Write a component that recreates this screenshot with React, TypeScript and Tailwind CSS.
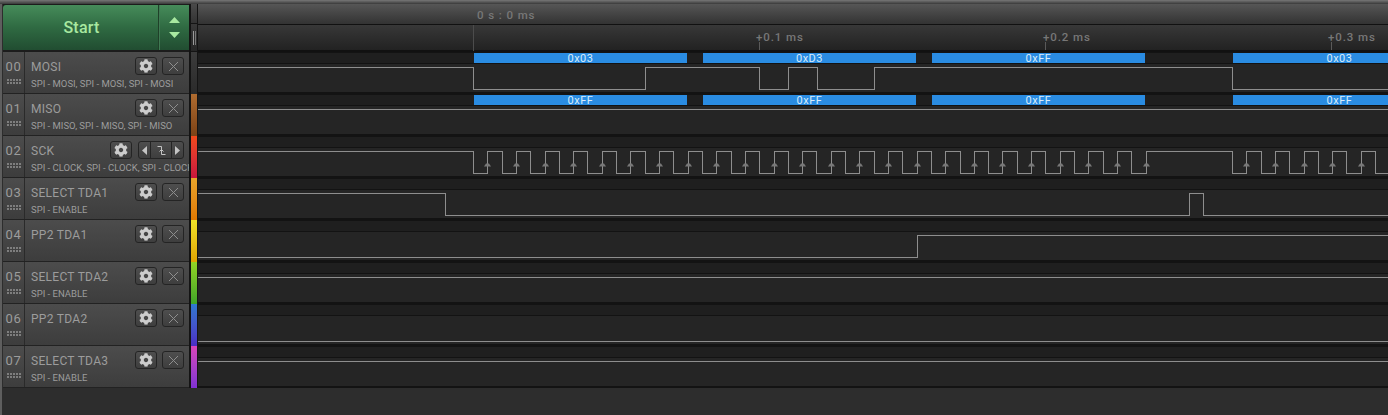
import React from "react";
import { FaCog } from "react-icons/fa";

const font = { fontFamily: "Roboto, sans-serif" };

function step(start: boolean, edges: number[], hi: number, lo: number) {
  let level = start;
  let d = `M198 ${(level ? hi : lo) + 0.5}`;
  for (const e of edges) {
    const x = e + 0.5;
    d += ` L${x} ${(level ? hi : lo) + 0.5}`;
    level = !level;
    d += ` L${x} ${(level ? hi : lo) + 0.5}`;
  }
  d += ` L1388 ${(level ? hi : lo) + 0.5}`;
  return d;
}

const sckEdges: number[] = [];
const sckRises: number[] = [];
for (let k = 0; k < 48; k++) {
  const x = Math.round(473 + 14.31 * k);
  sckEdges.push(x);
  if (k % 2 === 1) sckRises.push(x);
}
for (let k = 0; k < 12; k++) {
  const x = Math.round(1232 + 14.31 * k);
  if (x > 1388) break;
  sckEdges.push(x);
  if (k % 2 === 1) sckRises.push(x);
}

type Ch = {
  no: string;
  name: string;
  sub: string;
  strip: string;
  start: boolean;
  edges: number[];
  bars?: string;
  clock?: boolean;
};

const channels: Ch[] = [
  { no: "00", name: "MOSI", sub: "SPI - MOSI, SPI - MOSI, SPI - MOSI", strip: "bg-gradient-to-b from-[#3c3c3c] to-[#2a2a2a]", start: true, edges: [473, 645, 759, 788, 817, 874, 1232], bars: "mosi" },
  { no: "01", name: "MISO", sub: "SPI - MISO, SPI - MISO, SPI - MISO", strip: "bg-gradient-to-b from-[#b06c30] to-[#7c4216]", start: true, edges: [], bars: "miso" },
  { no: "02", name: "SCK", sub: "SPI - CLOCK, SPI - CLOCK, SPI - CLOCK", strip: "bg-gradient-to-b from-[#f2491a] to-[#c8143c]", start: true, edges: sckEdges, clock: true },
  { no: "03", name: "SELECT TDA1", sub: "SPI - ENABLE", strip: "bg-gradient-to-b from-[#e8a52a] to-[#e07800]", start: true, edges: [445, 1189, 1203] },
  { no: "04", name: "PP2 TDA1", sub: "", strip: "bg-gradient-to-b from-[#f0e428] to-[#e0a400]", start: false, edges: [917] },
  { no: "05", name: "SELECT TDA2", sub: "SPI - ENABLE", strip: "bg-gradient-to-b from-[#92d424] to-[#3ea428]", start: true, edges: [] },
  { no: "06", name: "PP2 TDA2", sub: "", strip: "bg-gradient-to-b from-[#2f78d0] to-[#4a2cc4]", start: false, edges: [] },
  { no: "07", name: "SELECT TDA3", sub: "SPI - ENABLE", strip: "bg-gradient-to-b from-[#d844b8] to-[#8030d4]", start: true, edges: [] },
];

function Grip() {
  const dots: React.ReactNode[] = [];
  for (let r = 0; r < 2; r++)
    for (let c = 0; c < 5; c++)
      dots.push(<rect key={`${r}-${c}`} x={c * 3} y={r * 3} width={2} height={2} fill="#7e7e7e" />);
  return (
    <svg width="14" height="5" viewBox="0 0 14 5" className="block">
      {dots}
    </svg>
  );
}

function IconButton({ children, w = "w-[22px]" }: { children: React.ReactNode; w?: string }) {
  return (
    <div className={`${w} h-[18px] flex items-center justify-center rounded-[3px] border border-[#242424] bg-gradient-to-b from-[#4e4e4e] to-[#3e3e3e]`}>
      {children}
    </div>
  );
}

function Controls({ clock }: { clock?: boolean }) {
  return (
    <div className="flex items-center gap-[5px] pr-[5px]">
      <div className={clock ? "mr-[1px]" : ""}>
        <IconButton>
          <FaCog size={14} color="#cccccc" />
        </IconButton>
      </div>
      {clock ? (
        <div className="w-[46px] h-[18px] flex items-stretch rounded-[3px] border border-[#242424] bg-gradient-to-b from-[#4e4e4e] to-[#3e3e3e]">
          <div className="w-[12px] flex items-center justify-center border-r border-[#242424]">
            <svg width="5" height="9" viewBox="0 0 5 9"><path d="M5 0V9L0 4.5Z" fill="#c4c4c4" /></svg>
          </div>
          <div className="flex-1 flex items-center justify-center">
            <svg width="9" height="11" viewBox="0 0 9 11" fill="none" stroke="#c4c4c4" strokeWidth="1">
              <path d="M0.5 1.5H4.5V9.5H8.5" />
              <path d="M2.5 6.5L4.5 4.5L6.5 6.5" />
            </svg>
          </div>
          <div className="w-[12px] flex items-center justify-center border-l border-[#242424]">
            <svg width="5" height="9" viewBox="0 0 5 9"><path d="M0 0V9L5 4.5Z" fill="#c4c4c4" /></svg>
          </div>
        </div>
      ) : (
        <IconButton>
          <svg width="11" height="11" viewBox="0 0 11 11" stroke="#8e8e8e" strokeWidth="1">
            <path d="M1 1L10 10M10 1L1 10" />
          </svg>
        </IconButton>
      )}
    </div>
  );
}

function Bar({ label, w, ml }: { label: string; w: string; ml: string }) {
  return (
    <div className={`${w} ${ml} shrink-0 h-[10px] bg-[#2a8ce2] flex items-center justify-center text-[11px] leading-none tracking-[0.5px] text-[#d8ecfb]`}>
      {label}
    </div>
  );
}

function Bars({ labels }: { labels: string[] }) {
  return (
    <div className="h-[10px] bg-[#1f1f1f] flex overflow-hidden">
      <Bar label={labels[0]} w="w-[213px]" ml="ml-[276px]" />
      <Bar label={labels[1]} w="w-[213px]" ml="ml-[16px]" />
      <Bar label={labels[2]} w="w-[213px]" ml="ml-[16px]" />
      <Bar label={labels[3]} w="w-[213px]" ml="ml-[88px]" />
    </div>
  );
}

function Row({ ch }: { ch: Ch }) {
  return (
    <div className="flex h-[42px]">
      <div className="w-[186px] shrink-0 flex border-b border-[#222222] bg-gradient-to-b from-[#4c4c4c] to-[#3d3d3d]">
        <div className="w-[22px] shrink-0 border-r border-[#2a2a2a] flex flex-col items-center pt-[7px]">
          <div className="text-[13px] leading-[16px] text-[#9c9c9c] tracking-[0.6px]">{ch.no}</div>
          <div className="mt-[4px]"><Grip /></div>
        </div>
        <div className="flex-1 min-w-0 pl-[6px] pt-[5px] flex flex-col overflow-hidden">
          <div className="flex items-start justify-between">
            <div className="text-[12px] leading-[16px] tracking-[0.3px] text-[#9c9c9c] whitespace-nowrap mt-[2px]">{ch.name}</div>
            <Controls clock={ch.clock} />
          </div>
          <div className="text-[9.5px] leading-[12px] text-[#9c9c9c] whitespace-nowrap mt-[3px]">{ch.sub}</div>
        </div>
      </div>
      <div className="w-[2px] shrink-0 bg-[#141414]" />
      <div className={`w-[6px] shrink-0 ${ch.strip}`} />
      <div className="w-[1px] shrink-0 bg-[#141414]" />
      <div className="flex-1 bg-[#131313] pt-[1px] min-w-0">
        {ch.bars === "mosi" ? (
          <Bars labels={["0x03", "0xD3", "0xFF", "0x03"]} />
        ) : ch.bars === "miso" ? (
          <Bars labels={["0xFF", "0xFF", "0xFF", "0xFF"]} />
        ) : (
          <div className="h-[10px] bg-[#1f1f1f]" />
        )}
        <div className="h-[1px]" />
        <svg width="1190" height="28" viewBox="198 12 1190 28" className="block bg-[#252525]">
          <path d={step(ch.start, ch.edges, 15, 37)} fill="none" stroke="#8e8e8e" strokeWidth="1" shapeRendering="crispEdges" />
          {ch.clock &&
            sckRises.map((x) => (
              <polygon key={x} points={`${x - 3},30.5 ${x - 1},27.5 ${x + 2},27.5 ${x + 4},30.5`} fill="#787878" />
            ))}
        </svg>
      </div>
    </div>
  );
}

function Tick({ label, x, tx }: { label: string; x: string; tx: string }) {
  return (
    <>
      <div className={`absolute top-[6px] ${tx} text-[11.5px] font-medium leading-[14px] tracking-[0.9px] text-[#777777] whitespace-nowrap`}>{label}</div>
      <div className={`absolute top-[18px] h-[8px] w-[1px] bg-[#5a5a5a] ${x}`} />
    </>
  );
}

export default function App() {
  return (
    <div className="w-[1388px] h-[415px] overflow-hidden bg-[#2d2d2d] flex flex-col" style={font}>
      <div className="h-[4px] shrink-0 bg-gradient-to-b from-[#777777] to-[#3a3a3a]" />
      <div className="flex-1 flex border-l-2 border-[#5e5e5e] min-h-0">
        <div className="flex-1 min-w-0 flex flex-col pl-[1px]">
          <div className="flex h-[48px] shrink-0">
            <div className="w-[186px] shrink-0 flex bg-[#1c1c1c] pt-[1px] pb-[2px] items-stretch">
              <div className="flex-1 flex items-center justify-center pl-[2px] rounded-tl-[3px] bg-gradient-to-b from-[#468c5a] via-[#2f6a42] to-[#214d31] text-[16px] font-medium text-[#a8e8a0] tracking-[0.2px]">
                Start
              </div>
              <div className="w-[1px] bg-[#1f4029]" />
              <div className="w-[30px] flex flex-col items-center justify-center gap-[9px] border-l border-[#3f7a52] bg-gradient-to-b from-[#468c5a] via-[#2f6a42] to-[#214d31]">
                <svg width="11" height="6" viewBox="0 0 11 6"><path d="M5.5 0L11 6H0Z" fill="#a8e8a0" /></svg>
                <svg width="11" height="6" viewBox="0 0 11 6"><path d="M0 0H11L5.5 6Z" fill="#a8e8a0" /></svg>
              </div>
            </div>
            <div className="w-[2px] shrink-0 bg-[#141414]" />
            <div className="w-[6px] shrink-0 flex flex-col">
              <div className="h-[20px] bg-gradient-to-b from-[#4a4a4a] to-[#333333] border-b border-[#141414]" />
              <div className="flex-1 bg-gradient-to-b from-[#383838] to-[#262626] flex items-center justify-center pt-[1px] gap-[1px] border-b border-[#141414]">
                <div className="w-[1px] h-[14px] bg-[#9a9a9a]" />
                <div className="w-[1px] h-[14px] bg-[#777777]" />
              </div>
            </div>
            <div className="w-[1px] shrink-0 bg-[#141414]" />
            <div className="flex-1 min-w-0 flex flex-col relative">
              <div className="h-[21px] shrink-0 bg-gradient-to-b from-[#565656] to-[#333333] border-b border-[#111111]" />
              <div className="flex-1 bg-gradient-to-b from-[#383838] to-[#222222] border-b-2 border-[#111111]" />
              <div className="absolute top-[4px] left-[279px] text-[11.5px] font-medium leading-[14px] tracking-[0.9px] text-[#777777] whitespace-nowrap">0 s : 0 ms</div>
              <div className="absolute top-[21px] left-[275px] h-[26px] w-[1px] bg-[#4c4c4c]" />
              <div className="absolute top-0 left-0 w-full h-[48px] translate-y-[20px]">
                <Tick label="+0.1 ms" x="left-[561px]" tx="left-[558px]" />
                <Tick label="+0.2 ms" x="left-[847px]" tx="left-[845px]" />
                <Tick label="+0.3 ms" x="left-[1133px]" tx="left-[1130px]" />
              </div>
            </div>
          </div>
          {channels.map((ch) => (
            <Row key={ch.no} ch={ch} />
          ))}
        </div>
      </div>
    </div>
  );
}
